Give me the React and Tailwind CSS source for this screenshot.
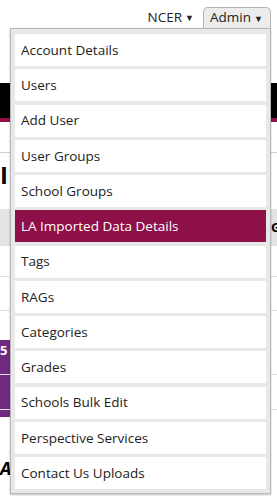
const items = [
  "Account Details",
  "Users",
  "Add User",
  "User Groups",
  "School Groups",
  "LA Imported Data Details",
  "Tags",
  "RAGs",
  "Categories",
  "Grades",
  "Schools Bulk Edit",
  "Perspective Services",
  "Contact Us Uploads",
];

export default function App() {
  return (
    <div className="relative w-[277px] h-[503px] overflow-hidden bg-white font-['Open_Sans',sans-serif] text-[#222]">
      {/* top links */}
      <div className="flex h-[28px] items-end justify-end pr-[6px]">
        <div className="mb-[4px] mr-[9px] flex items-center gap-[3px] text-[13.5px] leading-none">
          <span>NCER</span>
          <span className="text-[9px]">▼</span>
        </div>
        <div className="flex h-[21px] w-[68px] items-center gap-[3px] rounded-t-[5px] border border-b-0 border-[#b4b4b4] bg-[#ececec] pl-[6px] text-[13.5px] leading-none">
          <span>Admin</span>
          <span className="text-[9px]">▼</span>
        </div>
      </div>

      {/* page behind the menu */}
      <div className="mt-[55px] h-[35px] bg-black" />
      <div className="h-[4px] bg-[#8d1049]" />
      <div className="mt-[30px] h-px bg-[#cfcfcf]" />
      <div className="mt-[8px] h-[28px] text-[24px] font-bold leading-[28px] text-black">
        I
      </div>
      <div className="mt-[20px] flex h-[37px] items-center justify-end bg-[#e4e4e4] text-[13px] font-bold text-black">
        <span className="w-[6px]">G</span>
      </div>
      <div className="mt-[30px] h-px bg-[#e0e0e0]" />
      <div className="mt-[33px] h-px bg-[#e0e0e0]" />
      <div className="relative h-[107px]">
        <div className="mt-[29px] flex h-[77px] w-[10px] items-start bg-[#6f2a7f] pt-[1px] text-[13px] font-bold text-white">
          5
        </div>
        <div className="absolute left-0 right-0 top-[34px] h-px bg-[#e0e0e0]" />
        <div className="absolute left-0 right-0 top-[69px] h-px bg-[#e0e0e0]" />
      </div>
      <div className="mt-[12px] text-[18px] font-bold italic leading-none text-black">
        A
      </div>

      {/* dropdown menu */}
      <div className="absolute left-[10px] top-[28px] flex w-[261px] flex-col gap-[3.25px] border border-[#b8b8b8] bg-[#e8e8e8] px-[4px] pt-[5px] pb-[4px] shadow-[0_1px_2px_rgba(0,0,0,0.25)]">
        {items.map((item) => (
          <div
            key={item}
            className={
              item === "LA Imported Data Details"
                ? "flex h-[32px] items-center bg-[#8d1049] pl-[6px] text-[13.5px] text-white"
                : "flex h-[32px] items-center bg-white pl-[6px] text-[13.5px] text-[#222]"
            }
          >
            {item}
          </div>
        ))}
      </div>
    </div>
  );
}
